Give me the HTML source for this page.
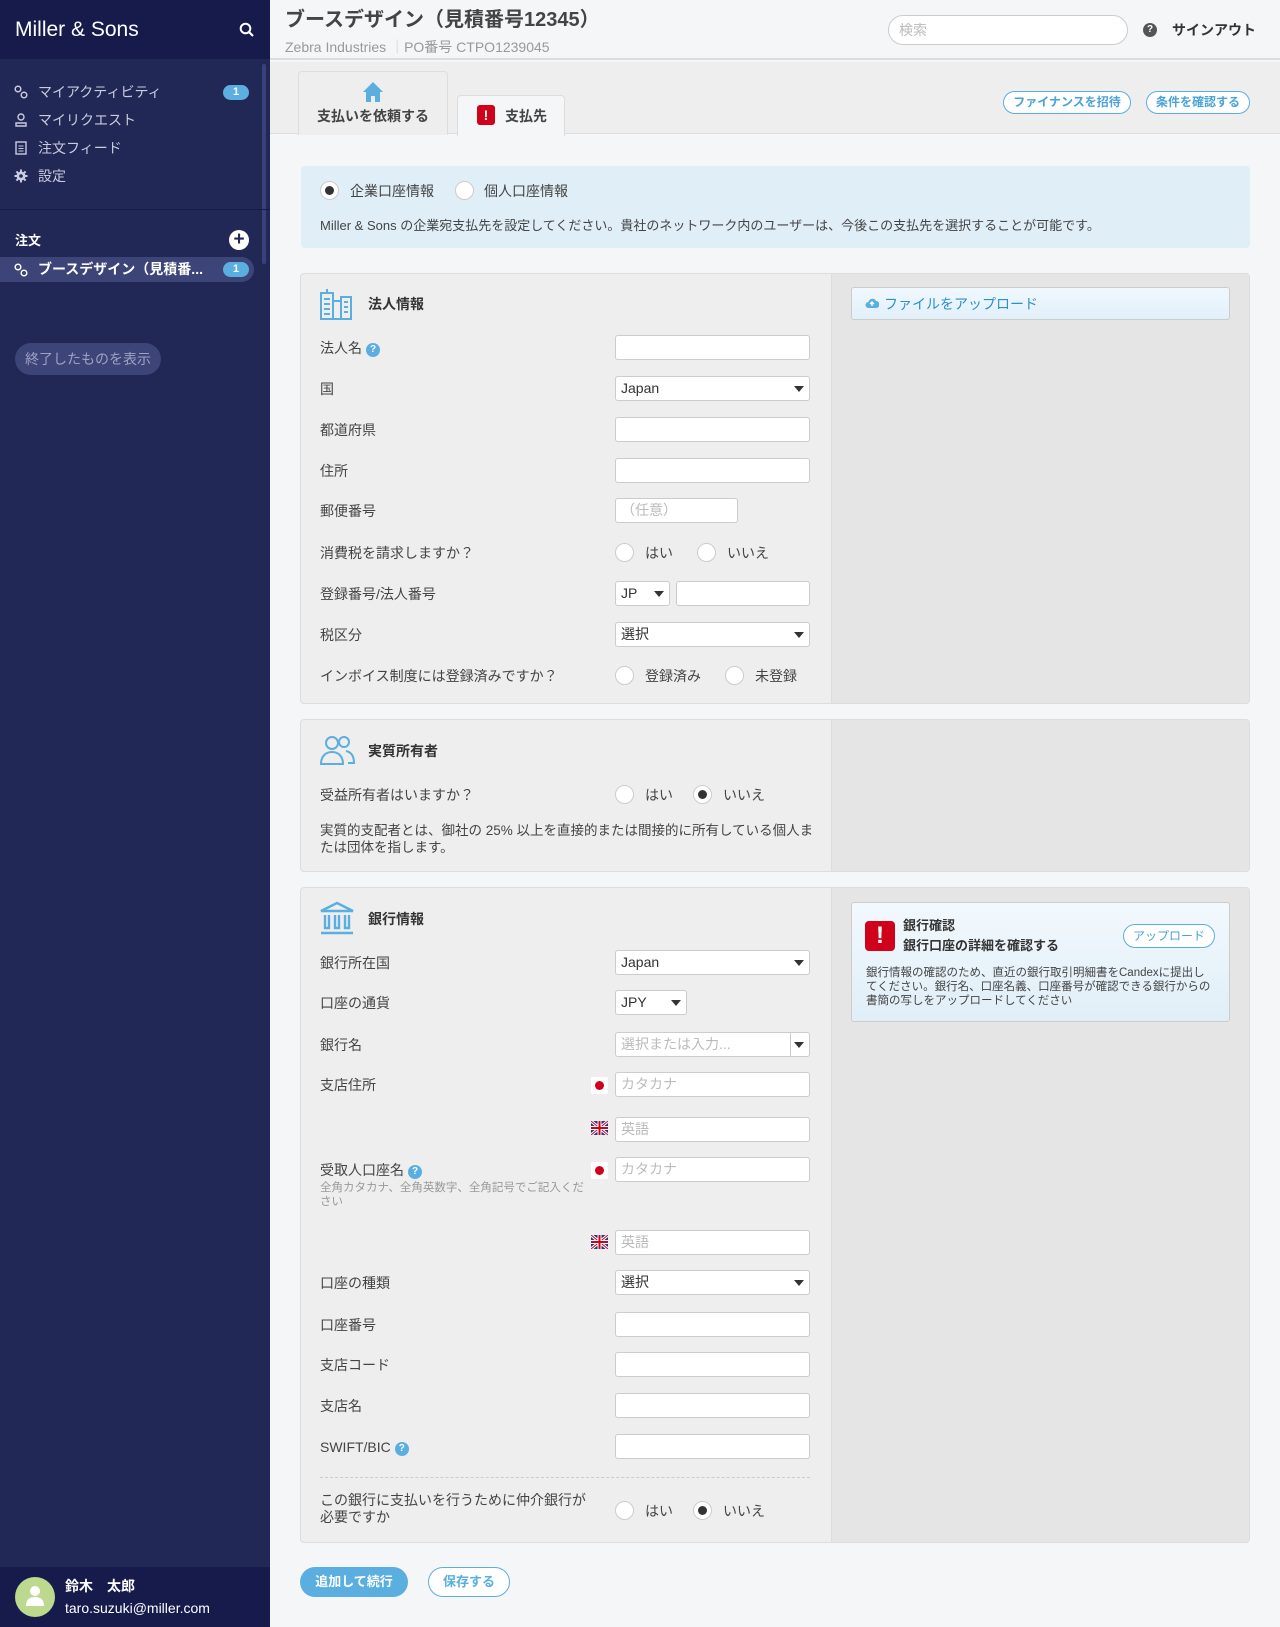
<!DOCTYPE html>
<html><head><meta charset="utf-8">
<style>
*{box-sizing:border-box;margin:0;padding:0}
body{width:1280px;height:1627px;position:relative;background:#f5f6f8;font-family:"Liberation Sans","Noto Sans CJK JP",sans-serif;color:#333;overflow:hidden}
.a{position:absolute}
.sb{left:0;top:0;width:270px;height:1627px;background:#222855}
.sbh{left:0;top:0;width:270px;height:59px;background:#161b4c}
.nav{left:38px;font-size:14px;color:#c9cbe0;line-height:20px}
.ico{left:14px;width:14px;height:14px}
.badge{width:26px;height:15px;border-radius:8px;background:#5aafe0;color:#fff;font-size:11px;font-weight:bold;text-align:center;line-height:15px}
.lbl{left:320px;font-size:14px;line-height:20px;color:#444}
.inp{left:615px;width:195px;height:25px;border:1px solid #ccc;border-radius:3px;background:#fff;font-size:14px;line-height:23px;padding-left:5px;color:#333}
.ph{color:#bbb}
.car{position:absolute;right:5px;top:9px;width:0;height:0;border-left:5px solid transparent;border-right:5px solid transparent;border-top:6px solid #333}
.rad{width:19px;height:19px;border-radius:50%;border:1px solid #ccc;background:#fff}
.rad.on::after{content:"";position:absolute;left:4px;top:4px;width:9px;height:9px;border-radius:50%;background:#333}
.rl{font-size:14px;line-height:20px;color:#444}
.card{background:#eeeeee;border:1px solid #ddd;border-radius:4px;overflow:hidden}
.cr{background:#e5e5e5}
.ct{font-size:14px;font-weight:bold;color:#333;line-height:20px}
.pill{border:1px solid #5aafe0;border-radius:12px;color:#4aa3d8;font-size:12px;font-weight:bold;text-align:center;background:#fff}
.fl{left:591px;width:17px;height:17px;background:#fff;border-radius:2px}
.q{display:inline-block;width:14px;height:14px;border-radius:50%;background:#5aafe0;color:#fff;font-size:10px;text-align:center;line-height:14px;font-weight:bold;vertical-align:1px;margin-left:4px}
</style></head><body>
<div class="a sb"></div>
<div class="a sbh"></div>
<div class="a" style="left:15px;top:17px;font-size:21px;color:#fff;line-height:26px">Miller &amp; Sons</div>
<svg class="a" style="left:239px;top:22px" width="16" height="16" viewBox="0 0 16 16"><circle cx="6.5" cy="6.5" r="4.8" stroke="#fff" stroke-width="2" fill="none"/><path d="M10 10l4 4" stroke="#fff" stroke-width="2.2"/></svg>
<div class="a" style="left:262px;top:64px;width:4px;height:200px;background:#3a407a;border-radius:2px"></div>
<svg class="a ico" style="top:85px" viewBox="0 0 14 14"><circle cx="4" cy="4" r="2.8" stroke="#c9cbe0" stroke-width="1.5" fill="none"/><circle cx="10" cy="10" r="2.8" stroke="#c9cbe0" stroke-width="1.5" fill="none"/></svg>
<div class="a nav" style="top:82px">マイアクティビティ</div>
<div class="a badge" style="left:223px;top:85px">1</div>
<svg class="a ico" style="top:113px" viewBox="0 0 14 14"><circle cx="7" cy="4" r="3" stroke="#c9cbe0" stroke-width="1.4" fill="none"/><path d="M2 13v-3h10v3z" stroke="#c9cbe0" stroke-width="1.4" fill="none"/></svg>
<div class="a nav" style="top:110px">マイリクエスト</div>
<svg class="a ico" style="top:141px" viewBox="0 0 14 14"><rect x="2" y="1" width="10" height="12" stroke="#c9cbe0" stroke-width="1.4" fill="none"/><path d="M4.5 5h5M4.5 7.5h5M4.5 10h5" stroke="#c9cbe0"/></svg>
<div class="a nav" style="top:138px">注文フィード</div>
<svg class="a ico" style="top:169px" viewBox="0 0 14 14"><circle cx="7" cy="7" r="4.5" fill="#c9cbe0"/><path d="M7 0.5v13M0.5 7h13M2.4 2.4l9.2 9.2M11.6 2.4l-9.2 9.2" stroke="#c9cbe0" stroke-width="2"/><circle cx="7" cy="7" r="1.8" fill="#222855"/></svg>
<div class="a nav" style="top:166px">設定</div>
<div class="a" style="left:0;top:209px;width:270px;height:1px;background:#161b4c"></div>
<div class="a" style="left:15px;top:230px;font-size:13px;font-weight:bold;color:#fff">注文</div>
<div class="a" style="left:229px;top:230px;width:20px;height:20px;border-radius:50%;background:#fff;color:#222855;font-size:19px;line-height:19px;text-align:center;font-weight:bold">+</div>
<div class="a" style="left:0;top:257px;width:254px;height:25px;background:#3d4478;border-radius:0 13px 13px 0"></div>
<svg class="a ico" style="top:263px" viewBox="0 0 14 14"><circle cx="4" cy="4" r="2.8" stroke="#fff" stroke-width="1.5" fill="none"/><circle cx="10" cy="10" r="2.8" stroke="#fff" stroke-width="1.5" fill="none"/></svg>
<div class="a" style="left:38px;top:259px;font-size:14px;font-weight:bold;color:#fff;line-height:20px">ブースデザイン（見積番...</div>
<div class="a badge" style="left:223px;top:262px">1</div>
<div class="a" style="left:15px;top:343px;width:146px;height:32px;border-radius:16px;background:#3d4478;color:#9ea2c4;font-size:14px;line-height:32px;text-align:center">終了したものを表示</div>
<div class="a" style="left:0;top:1567px;width:270px;height:60px;background:#161b4c"></div>
<div class="a" style="left:15px;top:1577px;width:40px;height:40px;border-radius:50%;background:#bcd98e"></div>
<svg class="a" style="left:25px;top:1584px" width="20" height="24" viewBox="0 0 20 24"><circle cx="10" cy="7" r="5" fill="#fff"/><path d="M1 22c0-7 4-9 9-9s9 2 9 9z" fill="#fff"/></svg>
<div class="a" style="left:65px;top:1576px;font-size:14px;font-weight:bold;color:#fff">鈴木　太郎</div>
<div class="a" style="left:65px;top:1600px;font-size:14px;color:#fff">taro.suzuki@miller.com</div>

<div class="a" style="left:270px;top:0;width:1010px;height:60px;background:#f5f6f8;border-bottom:2px solid #ddd"></div>
<div class="a" style="left:285px;top:7px;font-size:20px;font-weight:bold;color:#444;line-height:26px">ブースデザイン（見積番号12345）</div>
<div class="a" style="left:285px;top:37px;font-size:14px;color:#999">Zebra Industries <span style="color:#ccc">｜</span>PO番号 CTPO1239045</div>
<div class="a" style="left:888px;top:15px;width:240px;height:30px;border:1px solid #ccc;border-radius:15px;background:#fff;font-size:14px;color:#bbb;line-height:28px;padding-left:10px">検索</div>
<div class="a" style="left:1143px;top:23px;width:14px;height:14px;border-radius:50%;background:#555;color:#fff;font-size:10px;text-align:center;line-height:14px;font-weight:bold">?</div>
<div class="a" style="left:1172px;top:20px;font-size:14px;font-weight:bold;color:#333">サインアウト</div>

<div class="a" style="left:270px;top:62px;width:1010px;height:72px;background:#eeeeee;border-bottom:1px solid #ddd"></div>
<div class="a" style="left:298px;top:71px;width:150px;height:64px;background:#eee;border:1px solid #ddd;border-bottom:none;border-radius:4px 4px 0 0"></div>
<svg class="a" style="left:362px;top:81px" width="22" height="22" viewBox="0 0 22 22"><path d="M11 1L1 11h3v10h5v-6h4v6h5V11h3z" fill="#5aafe0"/></svg>
<div class="a" style="left:298px;top:106px;width:150px;text-align:center;font-size:14px;font-weight:bold;color:#444">支払いを依頼する</div>
<div class="a" style="left:457px;top:95px;width:108px;height:41px;background:#f5f6f8;border:1px solid #ddd;border-bottom:none;border-radius:4px 4px 0 0"></div>
<div class="a" style="left:477px;top:105px;width:18px;height:20px;background:#d0021b;border-radius:3px;color:#fff;font-weight:bold;font-size:14px;text-align:center;line-height:20px">!</div>
<div class="a" style="left:505px;top:106px;font-size:14px;font-weight:bold;color:#444">支払先</div>
<div class="a pill" style="left:1003px;top:91px;width:128px;height:23px;line-height:21px">ファイナンスを招待</div>
<div class="a pill" style="left:1146px;top:91px;width:104px;height:23px;line-height:21px">条件を確認する</div>

<div class="a" style="left:301px;top:166px;width:949px;height:82px;background:#e0eef7;border-radius:4px"></div>
<div class="a rad on" style="left:320px;top:181px"></div>
<div class="a rl" style="left:350px;top:181px">企業口座情報</div>
<div class="a rad" style="left:455px;top:181px"></div>
<div class="a rl" style="left:484px;top:181px">個人口座情報</div>
<div class="a" style="left:320px;top:215px;font-size:13px;color:#444">Miller &amp; Sons の企業宛支払先を設定してください。貴社のネットワーク内のユーザーは、今後この支払先を選択することが可能です。</div>

<div class="a card" style="left:300px;top:273px;width:950px;height:431px"><div class="a cr" style="left:530px;top:0;width:420px;height:431px;border-left:1px solid #ddd"></div></div>
<svg class="a" style="left:319px;top:287px" width="34" height="34" viewBox="0 0 34 34" fill="none" stroke="#5aafe0" stroke-width="2"><rect x="2" y="6" width="12" height="26"/><rect x="14" y="14" width="8" height="18"/><rect x="22" y="10" width="10" height="22"/><path d="M5 12h6M5 17h6M5 22h6M5 27h6M25 15h4M25 20h4M25 25h4M8 6V2"/></svg>
<div class="a ct" style="left:368px;top:294px">法人情報</div>
<div class="a" style="left:851px;top:287px;width:379px;height:33px;border:1px solid #ccc;border-radius:3px;background:linear-gradient(#f0f8fe,#e2f0fa)"></div>
<svg class="a" style="left:865px;top:297px" width="14" height="12" viewBox="0 0 14 12"><path d="M3.5 11a3 3 0 010-6 4 4 0 017.5-1 3 3 0 010 7z" fill="#5aafe0"/><path d="M7 9V5M5 7l2-2 2 2" stroke="#fff" stroke-width="1.4" fill="none"/></svg>
<div class="a" style="left:884px;top:294px;font-size:14px;color:#2d8fcc">ファイルをアップロード</div>

<div class="a lbl" style="top:338px">法人名<span class="q">?</span></div>
<div class="a inp" style="top:335px"></div>
<div class="a lbl" style="top:379px">国</div>
<div class="a inp" style="top:376px">Japan<span class="car"></span></div>
<div class="a lbl" style="top:420px">都道府県</div>
<div class="a inp" style="top:417px"></div>
<div class="a lbl" style="top:461px">住所</div>
<div class="a inp" style="top:458px"></div>
<div class="a lbl" style="top:501px">郵便番号</div>
<div class="a inp ph" style="top:498px;width:123px">（任意）</div>
<div class="a lbl" style="top:543px">消費税を請求しますか？</div>
<div class="a rad" style="left:615px;top:543px"></div><div class="a rl" style="left:645px;top:543px">はい</div>
<div class="a rad" style="left:697px;top:543px"></div><div class="a rl" style="left:727px;top:543px">いいえ</div>
<div class="a lbl" style="top:584px">登録番号/法人番号</div>
<div class="a inp" style="top:581px;width:55px">JP<span class="car"></span></div>
<div class="a inp" style="top:581px;left:676px;width:134px"></div>
<div class="a lbl" style="top:625px">税区分</div>
<div class="a inp" style="top:622px">選択<span class="car"></span></div>
<div class="a lbl" style="top:666px">インボイス制度には登録済みですか？</div>
<div class="a rad" style="left:615px;top:666px"></div><div class="a rl" style="left:645px;top:666px">登録済み</div>
<div class="a rad" style="left:725px;top:666px"></div><div class="a rl" style="left:755px;top:666px">未登録</div>

<div class="a card" style="left:300px;top:719px;width:950px;height:153px"><div class="a cr" style="left:530px;top:0;width:420px;height:153px;border-left:1px solid #ddd"></div></div>
<svg class="a" style="left:319px;top:734px" width="36" height="32" viewBox="0 0 36 32" fill="none" stroke="#5aafe0" stroke-width="2"><circle cx="13" cy="9" r="6"/><path d="M2 30c0-8 5-12 11-12s11 4 11 12z"/><circle cx="25" cy="8" r="5"/><path d="M27 17c5 1 8 5 8 12h-6"/></svg>
<div class="a ct" style="left:368px;top:741px">実質所有者</div>
<div class="a lbl" style="top:785px">受益所有者はいますか？</div>
<div class="a rad" style="left:615px;top:785px"></div><div class="a rl" style="left:645px;top:785px">はい</div>
<div class="a rad on" style="left:693px;top:785px"></div><div class="a rl" style="left:723px;top:785px">いいえ</div>
<div class="a" style="left:320px;top:822px;width:500px;font-size:13.5px;line-height:17px;color:#444">実質的支配者とは、御社の 25% 以上を直接的または間接的に所有している個人または団体を指します。</div>

<div class="a card" style="left:300px;top:887px;width:950px;height:656px"><div class="a cr" style="left:530px;top:0;width:420px;height:656px;border-left:1px solid #ddd"></div></div>
<svg class="a" style="left:319px;top:901px" width="36" height="34" viewBox="0 0 36 34" fill="none" stroke="#5aafe0" stroke-width="2.4"><path d="M2 10L18 2l16 8z"/><path d="M6 14v13h4V14M16 14v13h4V14M26 14v13h4V14"/><path d="M2 32h32"/></svg>
<div class="a ct" style="left:368px;top:909px">銀行情報</div>
<div class="a" style="left:851px;top:902px;width:379px;height:120px;border:1px solid #ccc;border-radius:3px;background:linear-gradient(#f2f9fe,#e0eef7)"></div>
<div class="a" style="left:865px;top:921px;width:30px;height:30px;background:#d0021b;border-radius:4px;color:#fff;font-size:24px;font-weight:bold;text-align:center;line-height:30px">!</div>
<div class="a" style="left:903px;top:916px;font-size:13px;font-weight:bold;color:#333;line-height:20px">銀行確認<br>銀行口座の詳細を確認する</div>
<div class="a pill" style="left:1123px;top:924px;width:92px;height:24px;line-height:22px;font-weight:normal">アップロード</div>
<div class="a" style="left:866px;top:966px;width:346px;font-size:11.5px;line-height:14px;color:#444">銀行情報の確認のため、直近の銀行取引明細書をCandexに提出してください。銀行名、口座名義、口座番号が確認できる銀行からの書簡の写しをアップロードしてください</div>

<div class="a lbl" style="top:953px">銀行所在国</div>
<div class="a inp" style="top:950px">Japan<span class="car"></span></div>
<div class="a lbl" style="top:993px">口座の通貨</div>
<div class="a inp" style="top:990px;width:72px">JPY<span class="car"></span></div>
<div class="a lbl" style="top:1035px">銀行名</div>
<div class="a inp ph" style="top:1032px">選択または入力...<span class="a" style="left:174px;top:0;width:1px;height:23px;background:#ccc"></span><span class="car"></span></div>
<div class="a lbl" style="top:1075px">支店住所</div>
<div class="a fl" style="top:1077px"><div style="width:9px;height:9px;border-radius:50%;background:#d0021b;margin:4px"></div></div>
<div class="a inp ph" style="top:1072px">カタカナ</div>
<svg class="a" style="left:591px;top:1121px" width="17" height="14" viewBox="0 0 17 14"><rect width="17" height="14" fill="#1a3a8c"/><path d="M0 0l17 14M17 0L0 14" stroke="#fff" stroke-width="3"/><path d="M0 0l17 14M17 0L0 14" stroke="#d0021b" stroke-width="1"/><path d="M8.5 0v14M0 7h17" stroke="#fff" stroke-width="4"/><path d="M8.5 0v14M0 7h17" stroke="#d0021b" stroke-width="2"/></svg>
<div class="a inp ph" style="top:1117px">英語</div>
<div class="a lbl" style="top:1160px">受取人口座名<span class="q">?</span></div>
<div class="a" style="left:320px;top:1181px;width:270px;font-size:11.5px;line-height:14px;color:#999">全角カタカナ、全角英数字、全角記号でご記入ください</div>
<div class="a fl" style="top:1162px"><div style="width:9px;height:9px;border-radius:50%;background:#d0021b;margin:4px"></div></div>
<div class="a inp ph" style="top:1157px">カタカナ</div>
<svg class="a" style="left:591px;top:1235px" width="17" height="14" viewBox="0 0 17 14"><rect width="17" height="14" fill="#1a3a8c"/><path d="M0 0l17 14M17 0L0 14" stroke="#fff" stroke-width="3"/><path d="M0 0l17 14M17 0L0 14" stroke="#d0021b" stroke-width="1"/><path d="M8.5 0v14M0 7h17" stroke="#fff" stroke-width="4"/><path d="M8.5 0v14M0 7h17" stroke="#d0021b" stroke-width="2"/></svg>
<div class="a inp ph" style="top:1230px">英語</div>
<div class="a lbl" style="top:1273px">口座の種類</div>
<div class="a inp" style="top:1270px">選択<span class="car"></span></div>
<div class="a lbl" style="top:1315px">口座番号</div>
<div class="a inp" style="top:1312px"></div>
<div class="a lbl" style="top:1355px">支店コード</div>
<div class="a inp" style="top:1352px"></div>
<div class="a lbl" style="top:1396px">支店名</div>
<div class="a inp" style="top:1393px"></div>
<div class="a lbl" style="top:1437px">SWIFT/BIC<span class="q">?</span></div>
<div class="a inp" style="top:1434px"></div>
<div class="a" style="left:320px;top:1477px;width:490px;border-top:1px dashed #ccc"></div>
<div class="a" style="left:320px;top:1492px;width:270px;font-size:14px;line-height:17px;color:#444">この銀行に支払いを行うために仲介銀行が必要ですか</div>
<div class="a rad" style="left:615px;top:1501px"></div><div class="a rl" style="left:645px;top:1501px">はい</div>
<div class="a rad on" style="left:693px;top:1501px"></div><div class="a rl" style="left:723px;top:1501px">いいえ</div>

<div class="a" style="left:300px;top:1567px;width:108px;height:30px;border-radius:15px;background:#5aafe0;color:#fff;font-size:13px;font-weight:bold;text-align:center;line-height:30px">追加して続行</div>
<div class="a" style="left:428px;top:1567px;width:82px;height:30px;border-radius:15px;border:1px solid #5aafe0;background:#fff;color:#5aafe0;font-size:13px;font-weight:bold;text-align:center;line-height:28px">保存する</div>
</body></html>
